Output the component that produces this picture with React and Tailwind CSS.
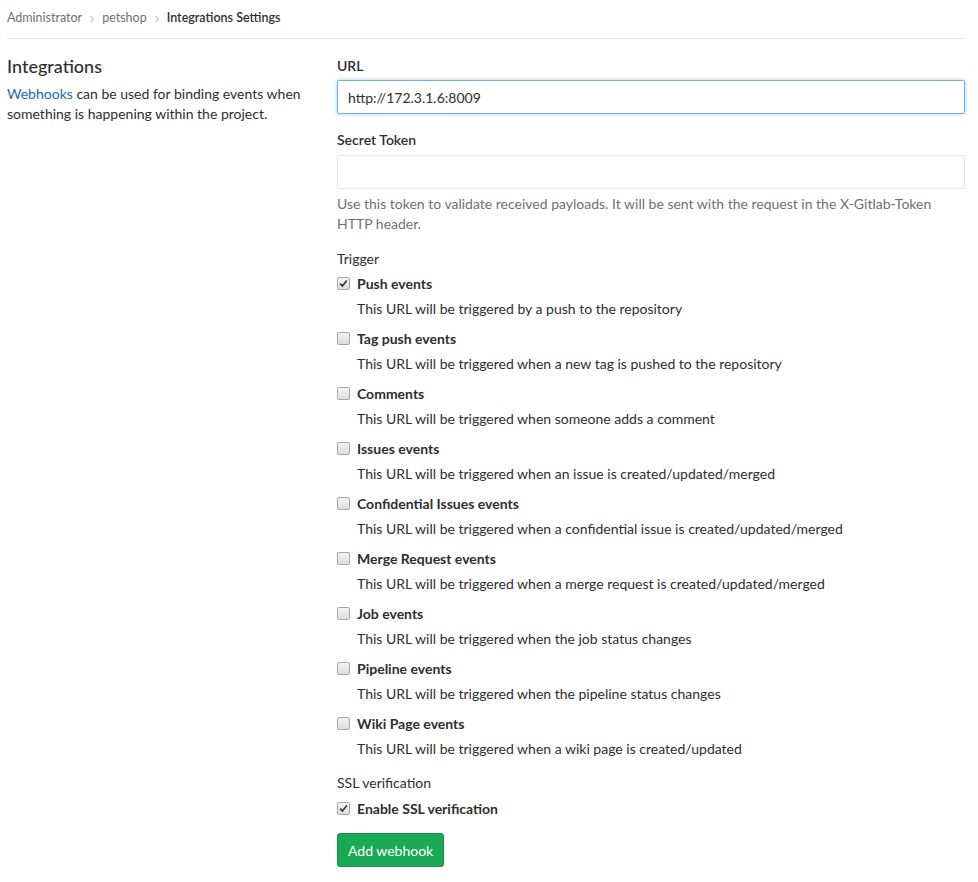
import React from "react";

const triggers = [
  { label: "Push events", desc: "This URL will be triggered by a push to the repository", checked: true },
  { label: "Tag push events", desc: "This URL will be triggered when a new tag is pushed to the repository" },
  { label: "Comments", desc: "This URL will be triggered when someone adds a comment" },
  { label: "Issues events", desc: "This URL will be triggered when an issue is created/updated/merged" },
  { label: "Confidential Issues events", desc: "This URL will be triggered when a confidential issue is created/updated/merged" },
  { label: "Merge Request events", desc: "This URL will be triggered when a merge request is created/updated/merged" },
  { label: "Job events", desc: "This URL will be triggered when the job status changes" },
  { label: "Pipeline events", desc: "This URL will be triggered when the pipeline status changes" },
  { label: "Wiki Page events", desc: "This URL will be triggered when a wiki page is created/updated" },
];

function Check({ checked }) {
  return (
    <span className="w-[13px] h-[13px] shrink-0 rounded-[2px] border border-[#a7a7a7] bg-gradient-to-b from-[#f4f4f4] to-[#dcdcdc] flex items-center justify-center">
      {checked && (
        <svg width="9" height="9" viewBox="0 0 9 9">
          <path d="M1.2 4.6 L3.4 7 L7.8 1.5" fill="none" stroke="#333" strokeWidth="1.6" />
        </svg>
      )}
    </span>
  );
}

function Chevron() {
  return (
    <svg width="8" height="10" viewBox="0 0 8 10" className="mx-[6px]">
      <path d="M2.5 2 L5.5 5 L2.5 8" fill="none" stroke="#a0a0a0" strokeWidth="1" />
    </svg>
  );
}

export default function App() {
  return (
    <div className="min-h-[882px] bg-white text-[14px] text-[#2e2e2e] font-['Lato',sans-serif] px-[7px] pr-[13px]">
      {/* Breadcrumb */}
      <div className="h-[39px] flex items-center pb-[1px] border-b border-[#e5e5e5] text-[12.5px] text-[#707070]">
        <span>Administrator</span>
        <Chevron />
        <span>petshop</span>
        <Chevron />
        <span className="font-semibold text-[#2e2e2e]">Integrations Settings</span>
      </div>

      <div className="flex pt-[14px]">
        {/* Left column */}
        <div className="w-[330px] shrink-0 pr-[20px]">
          <h4 className="text-[18px] leading-[26px] font-medium mb-[5px]">Integrations</h4>
          <p className="leading-[20px] mt-[1px]">
            <span className="text-[#1b69b6]">Webhooks</span> can be used for binding events when something is happening within the project.
          </p>
        </div>

        {/* Right column */}
        <div className="flex-1">
          <label className="block font-semibold leading-[26px] mb-[1px]">URL</label>
          <div className="h-[34px] border border-[#73afea] rounded-[2px] shadow-[0_0_4px_rgba(115,175,234,0.6)] flex items-center px-[10px]">
            http://172.3.1.6:8009
          </div>

          <label className="block font-semibold leading-[26px] mt-[13px] mb-[2px]">Secret Token</label>
          <div className="h-[34px] border border-[#e5e5e5] rounded-[2px]"></div>
          <p className="text-[#707070] leading-[20px] mt-[5px]">
            Use this token to validate received payloads. It will be sent with the request in the X-Gitlab-Token HTTP header.
          </p>

          <div className="mt-[15px] leading-[20px]">Trigger</div>
          <div className="mt-[4px] flex flex-col">
            {triggers.map((t) => (
              <div key={t.label} className="h-[55px]">
                <div className="flex items-center gap-[7px] h-[20px]">
                  <Check checked={t.checked} />
                  <span className="font-bold">{t.label}</span>
                </div>
                <div className="pl-[20px] mt-[6px] leading-[20px]">{t.desc}</div>
              </div>
            ))}
          </div>

          <div className="leading-[20px] mt-[5px]">SSL verification</div>
          <div className="flex items-center gap-[7px] h-[20px] mt-[5px]">
            <Check checked />
            <span className="font-bold">Enable SSL verification</span>
          </div>

          <button className="mt-[15px] h-[34px] px-[10px] rounded-[3px] bg-[#1aaa55] border border-[#168f48] text-white">
            Add webhook
          </button>
        </div>
      </div>
    </div>
  );
}
